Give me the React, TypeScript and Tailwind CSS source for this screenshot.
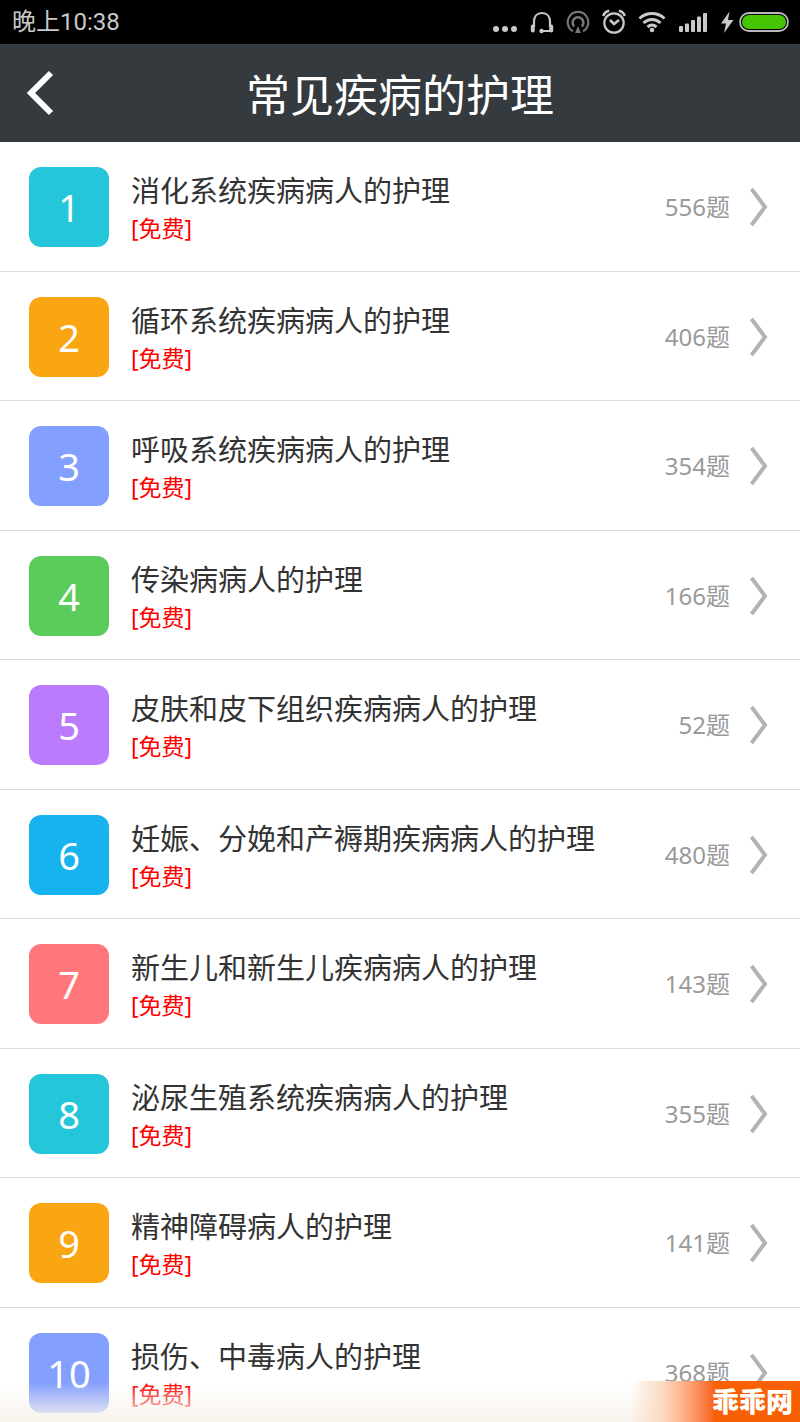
import React from 'react';

interface Chapter {
  title: string;
  count: number;
  color: string;
}

const chapters: Chapter[] = [
  { title: '消化系统疾病病人的护理', count: 556, color: 'bg-[#26c6da]' },
  { title: '循环系统疾病病人的护理', count: 406, color: 'bg-[#faa613]' },
  { title: '呼吸系统疾病病人的护理', count: 354, color: 'bg-[#839fff]' },
  { title: '传染病病人的护理', count: 166, color: 'bg-[#5bcb5b]' },
  { title: '皮肤和皮下组织疾病病人的护理', count: 52, color: 'bg-[#bb7bfd]' },
  { title: '妊娠、分娩和产褥期疾病病人的护理', count: 480, color: 'bg-[#17b3ee]' },
  { title: '新生儿和新生儿疾病病人的护理', count: 143, color: 'bg-[#ff777a]' },
  { title: '泌尿生殖系统疾病病人的护理', count: 355, color: 'bg-[#26c6da]' },
  { title: '精神障碍病人的护理', count: 141, color: 'bg-[#faa613]' },
  { title: '损伤、中毒病人的护理', count: 368, color: 'bg-[#839fff]' },
];

const StatusBar: React.FC = () => {
  return (
    <div className="h-11 shrink-0 bg-black text-[#c9c9c9] flex items-center justify-between pl-3 pr-[10px]">
      <span className="font-['Roboto','Noto_Sans_CJK_SC',sans-serif] text-[24px] leading-none">晚上10:38</span>
      <div className="flex items-center">
        <svg width="26" height="44" viewBox="0 0 26 44" fill="currentColor">
          <circle cx="4" cy="29" r="3" />
          <circle cx="13" cy="29" r="3" />
          <circle cx="22" cy="29" r="3" />
        </svg>
        <svg className="ml-3" width="24" height="44" viewBox="0 0 24 44" fill="none" stroke="currentColor" strokeWidth="2.200">
          <path d="M4 27v-5.500c0-5 3-8.500 8-8.500s8 3.500 8 8.500V27M12 31h8.500" />
          <path d="M2.800 26.500v4M21.200 26.500v4" strokeWidth="4" strokeLinecap="round" />
          <circle cx="11.500" cy="31" r="2.200" fill="currentColor" stroke="none" />
        </svg>
        <svg className="ml-3 text-[#777777]" width="24" height="44" viewBox="0 0 24 44" fill="none" stroke="currentColor" strokeWidth="2.200">
          <path d="M7 31.200a10.300 10.300 0 1 1 10 0" />
          <path d="M8.200 26.500a5.400 5.400 0 1 1 7.600 0" strokeWidth="2.600" />
          <path d="M12 26l3 7H9z" fill="currentColor" stroke="none" />
        </svg>
        <svg className="ml-3" width="24" height="44" viewBox="0 0 24 44" fill="none" stroke="currentColor" strokeWidth="2.200">
          <circle cx="12" cy="23" r="9.700" />
          <path d="M8 20l4 4 5-4" strokeWidth="2.600" />
          <path d="M1.200 16c1-3 3-4.600 6-5.200M22.800 16c-1-3-3-4.600-6-5.200" strokeWidth="2.600" />
        </svg>
        <svg className="ml-3" width="28" height="44" viewBox="0 0 28 44" fill="none" stroke="currentColor" strokeWidth="3">
          <path d="M1.500 18.500c7-6.600 18-6.600 25 0M5.500 23c5-4.600 12-4.600 17 0M9.500 27c3-2.600 6-2.600 9 0" />
          <circle cx="14" cy="30" r="2.300" fill="currentColor" stroke="none" />
        </svg>
        <svg className="ml-3" width="30" height="44" viewBox="0 0 30 44" fill="currentColor">
          <rect x="1" y="26" width="4" height="6" rx="1" />
          <rect x="7" y="23.500" width="4" height="8.500" rx="1" />
          <rect x="13" y="20" width="4" height="12" rx="1" />
          <rect x="19" y="16.500" width="4" height="15.500" rx="1" />
          <rect x="25" y="13" width="4" height="19" rx="1" />
        </svg>
        <svg className="ml-3" width="14" height="44" viewBox="0 0 14 44" fill="currentColor">
          <path d="M9.500 11.500L1 23.500h5l-2 9.500L13.500 20H8z" />
        </svg>
        <svg className="ml-1" width="52" height="44" viewBox="0 0 52 44">
          <rect x="2" y="13" width="48" height="18" rx="9" fill="none" stroke="#b9b9b9" strokeWidth="1.800" />
          <rect x="4" y="15" width="44" height="14" rx="7" fill="#45c403" />
        </svg>
      </div>
    </div>
  );
};

const App: React.FC = () => {
  return (
    <div className="relative h-screen overflow-hidden flex flex-col bg-white font-['Noto_Sans','Noto_Sans_CJK_SC',sans-serif]">
      <StatusBar />

      <header className="h-[98px] shrink-0 bg-[#343a3d] text-white grid grid-cols-[80px_1fr_80px] items-center">
        <button type="button" aria-label="返回" className="flex h-full items-center justify-center">
          <svg width="28" height="46" viewBox="0 0 28 46" fill="none" stroke="currentColor" strokeWidth="6">
            <path d="M25 3L5 23l20 20" />
          </svg>
        </button>
        <h1 className="pt-1 text-center text-[44px] leading-[56px]">常见疾病的护理</h1>
      </header>

      <ul className="flex-1 min-h-0 overflow-hidden">
        {chapters.map((chapter, index) => (
          <li key={chapter.title} className="odd:h-[130px] even:h-[129px] border-b border-[#dcdcdc]">
            <a href={`#chapter-${index + 1}`} className="flex pt-[25px] pl-[29px] pr-8">
              <span className={`w-20 h-20 shrink-0 rounded-xl flex items-center justify-center text-white text-[38px] leading-none ${chapter.color}`}>
                {index + 1}
              </span>
              <span className="ml-[22px] flex-1 min-w-0 flex flex-col">
                <span className="text-[29px] leading-[48px] text-[#333333] truncate">{chapter.title}</span>
                <span className="text-[23px] leading-[26px] text-[#ff0000]">[免费]</span>
              </span>
              <span className="h-20 flex items-center text-[24px] text-[#999999]">{chapter.count}题</span>
              <svg className="ml-5 mt-5 shrink-0" width="18" height="40" viewBox="0 0 18 40" fill="none" stroke="#b3b3b3" strokeWidth="4">
                <path d="M1.500 2L15 20 1.500 38" />
              </svg>
            </a>
          </li>
        ))}
      </ul>

      {/* bottom fade with the site badge */}
      <div className="absolute inset-x-0 bottom-0 h-10 bg-gradient-to-b from-[#f8f3ec]/0 to-[#f8f3ec] pointer-events-none" />
      <div className="absolute right-0 bottom-0 h-[41px] w-[170px] bg-gradient-to-r from-[#fdf3ea]/0 via-[#fbd9c0] via-20% to-[#f86003] to-50% flex items-end justify-end pr-[7px] pb-1">
        <span className="text-white text-[27px] leading-8 font-black">乖乖网</span>
      </div>
    </div>
  );
};

export default App;
